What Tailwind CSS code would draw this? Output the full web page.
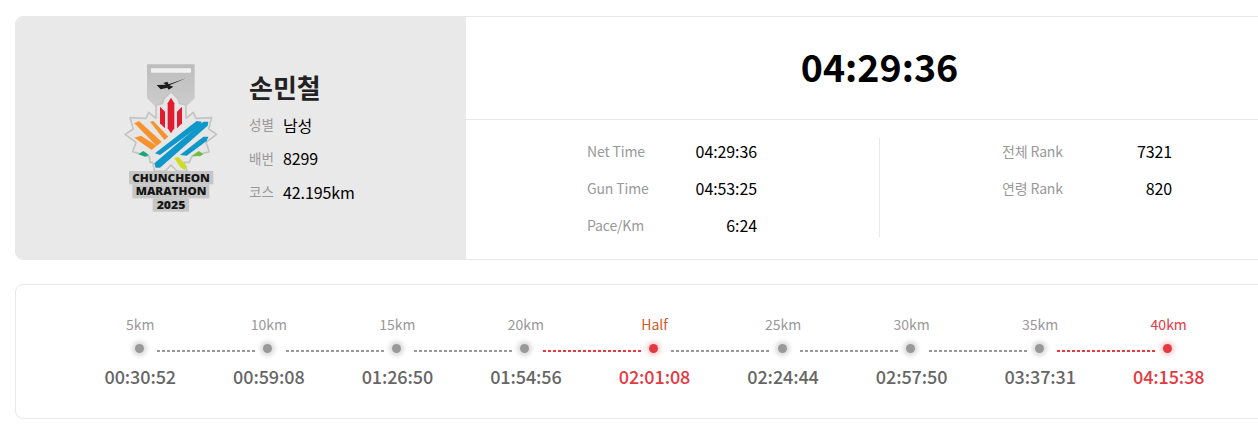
<!DOCTYPE html>
<html lang="en">
<head>
  <meta charset="UTF-8" />
  <meta name="viewport" content="width=device-width, initial-scale=1.0"/>
  <title>Result</title>
  <script src="https://cdn.jsdelivr.net/npm/@tailwindcss/browser@4"></script>
</head>
<body class="bg-white overflow-hidden font-['Noto_Sans_CJK_KR',sans-serif]">
  <div class="w-[1292px] pl-[15px] pt-[16px]">

    <!-- record card -->
    <div class="flex h-[244px] rounded-lg border border-[#e8e8e8] overflow-hidden">
      <div class="w-[451px] shrink-0 bg-[#e9e9e9] flex items-center pl-[95px] -my-px -ml-px">
        <svg width="120" height="165" viewBox="0 0 360 495" class="-mt-[2px] shrink-0">
          <defs>
            <linearGradient id="ribbon" x1="0" x2="0" y1="0" y2="1">
              <stop offset="0" stop-color="#bdbdbd"/>
              <stop offset="1" stop-color="#d2d2d2"/>
            </linearGradient>
          </defs>
          <polygon points="111,28 254,28 254,130 183,200 111,130" fill="url(#ribbon)"/>
          <rect x="123" y="40" width="120" height="13" rx="2" fill="#f1f1f1"/>
          <path d="M228 70 L176 88 L172 80 L160 84 L168 89 L140 90 L152 103 L172 98 L176 104 L190 95 L178 91 Z" fill="#1c1c1c"/>
          <polygon points="183,110 205,132 208,145 228,150 228,190 250,172 258,190 305,188 296,222 320,238 288,262 298,290 245,305 238,322 222,322 232,350 200,348 183,330 166,348 134,350 128,322 120,322 118,305 68,290 78,262 45,238 70,222 60,188 108,190 116,172 138,190 138,150 158,145 161,132" fill="#e6e6e6" stroke="#c4c4c4" stroke-width="5" stroke-linejoin="round"/>
          <!-- red -->
          <polygon points="183,128 193,145 193,220 183,235 173,220 173,145" fill="#e31b30"/>
          <polygon points="150,155 165,170 165,220 150,205" fill="#e31b30"/>
          <polygon points="201,170 216,155 216,205 201,220" fill="#e31b30"/>
          <!-- orange -->
          <polygon points="73,205 87,198 155,260 140,273" fill="#f7932f"/>
          <polygon points="120,200 130,198 175,245 163,255" fill="#f7932f"/>
          <polygon points="73,248 93,242 140,272 125,285" fill="#f7932f"/>
          <!-- blue -->
          <polygon points="135,295 260,198 275,200 273,210 150,300" fill="#0e97c9"/>
          <polygon points="133,325 280,200 295,200 293,212 150,338 137,338" fill="#0e97c9"/>
          <polygon points="210,300 280,245 295,245 290,258 230,302" fill="#0e97c9"/>
          <!-- green / lime -->
          <polygon points="85,298 100,288 117,300 105,305" fill="#18a874"/>
          <polygon points="245,302 267,288 280,298 270,304" fill="#6cbf3d"/>
          <polygon points="193,310 205,305 232,335 223,345 210,335" fill="#cfdc26"/>
          <!-- wordmark -->
          <rect x="57" y="348" width="253" height="40" fill="#c6c6c6"/>
          <rect x="67" y="388" width="231" height="42" fill="#c6c6c6"/>
          <rect x="128" y="430" width="109" height="40" fill="#c6c6c6"/>
          <g font-family="'Open Sans', sans-serif" font-weight="800" font-size="33" fill="#161616" text-anchor="middle">
            <text x="183" y="380" textLength="233" lengthAdjust="spacingAndGlyphs">CHUNCHEON</text>
            <text x="183" y="421" textLength="212" lengthAdjust="spacingAndGlyphs">MARATHON</text>
            <text x="183" y="462" textLength="86" lengthAdjust="spacingAndGlyphs">2025</text>
          </g>
        </svg>
        <div class="ml-[19px] -mt-[5px]">
          <h2 class="text-[26px] leading-[36px] font-bold text-[#222]">손민철</h2>
          <dl class="mt-[9px] flex flex-col gap-[11.5px]">
            <div class="flex items-center h-[22px]">
              <dt class="w-[34px] text-[13.5px] text-[#999]">성별</dt>
              <dd class="text-[16px] tracking-[-0.1px] text-black">남성</dd>
            </div>
            <div class="flex items-center h-[22px]">
              <dt class="w-[34px] text-[13.5px] text-[#999]">배번</dt>
              <dd class="text-[16px] tracking-[-0.1px] text-black">8299</dd>
            </div>
            <div class="flex items-center h-[22px]">
              <dt class="w-[34px] text-[13.5px] text-[#999]">코스</dt>
              <dd class="text-[16px] tracking-[-0.1px] text-black">42.195km</dd>
            </div>
          </dl>
        </div>
      </div>

      <div class="flex-1 flex flex-col">
        <div class="h-[103px] shrink-0 flex items-center justify-center border-b border-[#e8e8e8] pb-[4px] pl-[2px]">
          <span class="text-[37.6px] font-bold text-black">04:29:36</span>
        </div>
        <div class="flex-1 flex pt-[18px] pb-[22px]">
          <div class="w-[414px] flex justify-center border-r border-[#e8e8e8] pr-[1px]">
            <dl class="w-[170px] pt-[2px] flex flex-col gap-[15px]">
              <div class="flex justify-between items-center h-[22px]">
                <dt class="text-sm tracking-[-0.15px] text-[#999]">Net Time</dt><dd class="text-[16px] tracking-[-0.1px] text-black">04:29:36</dd>
              </div>
              <div class="flex justify-between items-center h-[22px]">
                <dt class="text-sm tracking-[-0.15px] text-[#999]">Gun Time</dt><dd class="text-[16px] tracking-[-0.1px] text-black">04:53:25</dd>
              </div>
              <div class="flex justify-between items-center h-[22px]">
                <dt class="text-sm tracking-[-0.15px] text-[#999]">Pace/Km</dt><dd class="text-[16px] tracking-[-0.1px] text-black">6:24</dd>
              </div>
            </dl>
          </div>
          <div class="flex-1 flex justify-center pl-[3px]">
            <dl class="w-[170px] pt-[2px] flex flex-col gap-[15px]">
              <div class="flex justify-between items-center h-[22px]">
                <dt class="text-sm tracking-[-0.15px] text-[#999]">전체 Rank</dt><dd class="text-[16px] tracking-[-0.1px] text-black">7321</dd>
              </div>
              <div class="flex justify-between items-center h-[22px]">
                <dt class="text-sm tracking-[-0.15px] text-[#999]">연령 Rank</dt><dd class="text-[16px] tracking-[-0.1px] text-black">820</dd>
              </div>
            </dl>
          </div>
        </div>
      </div>
    </div>

    <!-- splits card -->
    <div class="mt-[24px] h-[135px] rounded-lg border border-[#e8e8e8] px-[59px] pt-[29px]">
      <ol class="grid grid-cols-9">
        <li class="relative flex flex-col items-center">
          <span class="ml-[2px] text-sm leading-[20px] text-[#999]">5km</span>
          <span class="my-[10px] size-[9px] rounded-full bg-[#999] shadow-[0_0_4px_3px_#dcdcdc]"></span>
          <span class="ml-[2px] text-lg tracking-[-0.1px] leading-[26px] font-medium text-[#666]">00:30:52</span>
          <span class="absolute top-[36px] left-[calc(50%+18px)] w-[98px] h-[2px] bg-[repeating-linear-gradient(90deg,#999_0_3px,transparent_3px_5px)]"></span>
        </li>
        <li class="relative flex flex-col items-center">
          <span class="ml-[2px] text-sm leading-[20px] text-[#999]">10km</span>
          <span class="my-[10px] size-[9px] rounded-full bg-[#999] shadow-[0_0_4px_3px_#dcdcdc]"></span>
          <span class="ml-[2px] text-lg tracking-[-0.1px] leading-[26px] font-medium text-[#666]">00:59:08</span>
          <span class="absolute top-[36px] left-[calc(50%+18px)] w-[98px] h-[2px] bg-[repeating-linear-gradient(90deg,#999_0_3px,transparent_3px_5px)]"></span>
        </li>
        <li class="relative flex flex-col items-center">
          <span class="ml-[2px] text-sm leading-[20px] text-[#999]">15km</span>
          <span class="my-[10px] size-[9px] rounded-full bg-[#999] shadow-[0_0_4px_3px_#dcdcdc]"></span>
          <span class="ml-[2px] text-lg tracking-[-0.1px] leading-[26px] font-medium text-[#666]">01:26:50</span>
          <span class="absolute top-[36px] left-[calc(50%+18px)] w-[98px] h-[2px] bg-[repeating-linear-gradient(90deg,#999_0_3px,transparent_3px_5px)]"></span>
        </li>
        <li class="relative flex flex-col items-center">
          <span class="ml-[2px] text-sm leading-[20px] text-[#999]">20km</span>
          <span class="my-[10px] size-[9px] rounded-full bg-[#999] shadow-[0_0_4px_3px_#dcdcdc]"></span>
          <span class="ml-[2px] text-lg tracking-[-0.1px] leading-[26px] font-medium text-[#666]">01:54:56</span>
          <span class="absolute top-[36px] left-[calc(50%+18px)] w-[98px] h-[2px] bg-[repeating-linear-gradient(90deg,#e5393f_0_3px,transparent_3px_5px)]"></span>
        </li>
        <li class="relative flex flex-col items-center">
          <span class="ml-[2px] text-sm leading-[20px] text-[#cf5a2a]">Half</span>
          <span class="my-[10px] size-[9px] rounded-full bg-[#e5393f] shadow-[0_0_4px_3px_#f8d5d7]"></span>
          <span class="ml-[2px] text-lg tracking-[-0.1px] leading-[26px] font-medium text-[#e5393f]">02:01:08</span>
          <span class="absolute top-[36px] left-[calc(50%+18px)] w-[98px] h-[2px] bg-[repeating-linear-gradient(90deg,#999_0_3px,transparent_3px_5px)]"></span>
        </li>
        <li class="relative flex flex-col items-center">
          <span class="ml-[2px] text-sm leading-[20px] text-[#999]">25km</span>
          <span class="my-[10px] size-[9px] rounded-full bg-[#999] shadow-[0_0_4px_3px_#dcdcdc]"></span>
          <span class="ml-[2px] text-lg tracking-[-0.1px] leading-[26px] font-medium text-[#666]">02:24:44</span>
          <span class="absolute top-[36px] left-[calc(50%+18px)] w-[98px] h-[2px] bg-[repeating-linear-gradient(90deg,#999_0_3px,transparent_3px_5px)]"></span>
        </li>
        <li class="relative flex flex-col items-center">
          <span class="ml-[2px] text-sm leading-[20px] text-[#999]">30km</span>
          <span class="my-[10px] size-[9px] rounded-full bg-[#999] shadow-[0_0_4px_3px_#dcdcdc]"></span>
          <span class="ml-[2px] text-lg tracking-[-0.1px] leading-[26px] font-medium text-[#666]">02:57:50</span>
          <span class="absolute top-[36px] left-[calc(50%+18px)] w-[98px] h-[2px] bg-[repeating-linear-gradient(90deg,#999_0_3px,transparent_3px_5px)]"></span>
        </li>
        <li class="relative flex flex-col items-center">
          <span class="ml-[2px] text-sm leading-[20px] text-[#999]">35km</span>
          <span class="my-[10px] size-[9px] rounded-full bg-[#999] shadow-[0_0_4px_3px_#dcdcdc]"></span>
          <span class="ml-[2px] text-lg tracking-[-0.1px] leading-[26px] font-medium text-[#666]">03:37:31</span>
          <span class="absolute top-[36px] left-[calc(50%+18px)] w-[98px] h-[2px] bg-[repeating-linear-gradient(90deg,#e5393f_0_3px,transparent_3px_5px)]"></span>
        </li>
        <li class="relative flex flex-col items-center">
          <span class="ml-[2px] text-sm leading-[20px] text-[#e5393f]">40km</span>
          <span class="my-[10px] size-[9px] rounded-full bg-[#e5393f] shadow-[0_0_4px_3px_#f8d5d7]"></span>
          <span class="ml-[2px] text-lg tracking-[-0.1px] leading-[26px] font-medium text-[#e5393f]">04:15:38</span>
        </li>
      </ol>
    </div>
  </div>
</body>
</html>
